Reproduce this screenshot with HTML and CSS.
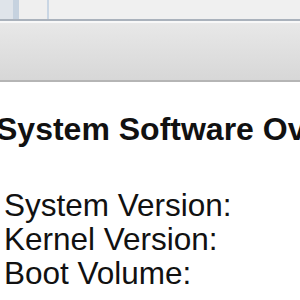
FILE: index.html
```html
<!DOCTYPE html>
<html lang="en">
<head>
    <meta charset="UTF-8">
    <title>System Software Overview</title>
    <link rel="stylesheet" href="styles.css">
</head>
<body>
    <div class="tabs">
        <div class="sidebar-edge"></div>
        <div class="sidebar-split"></div>
        <div class="list-col"></div>
        <div class="list-split"></div>
        <div class="list-rest"></div>
    </div>
    <div class="toolbar"></div>

    <div class="content">
        <h1>System Software Ov</h1>
        <ul class="info">
            <li>System Version:</li>
            <li>Kernel Version:</li>
            <li>Boot Volume:</li>
        </ul>
    </div>
</body>
</html>
```

FILE: styles.css
```css
body {
    margin: 0;
    width: 300px;
    height: 300px;
    overflow: hidden;
    background-color: #fff;
    font-family: 'Liberation Sans', Arial, sans-serif;
    color: #111;
}

.tabs {
    display: flex;
    height: 19px;
    border-bottom: 2px solid #aab2bc;
}

.sidebar-edge {
    width: 13px;
    background-color: #dfe4ea;
}

.sidebar-split {
    width: 6px;
    background-color: #c6d2df;
}

.list-col {
    width: 28px;
    background-color: #efefef;
}

.list-split {
    width: 2px;
    background-color: #c9d6e4;
}

.list-rest {
    flex: 1;
    background-color: #f0f0f0;
}

.toolbar {
    height: 57px;
    border-top: 2px solid #f8f8f8;
    border-bottom: 2px solid #b5b5b5;
    background: linear-gradient(#e8e8e8, #d7d7d7);
}

.content {
    padding: 0 4px;
}

h1 {
    margin: 29px 0 0 -8px;
    font-size: 32px;
    line-height: 36px;
    font-weight: bold;
    white-space: nowrap;
}

.info {
    list-style: none;
    margin: 41px 0 0;
    padding: 0;
    font-size: 31.5px;
    line-height: 34px;
}
```
